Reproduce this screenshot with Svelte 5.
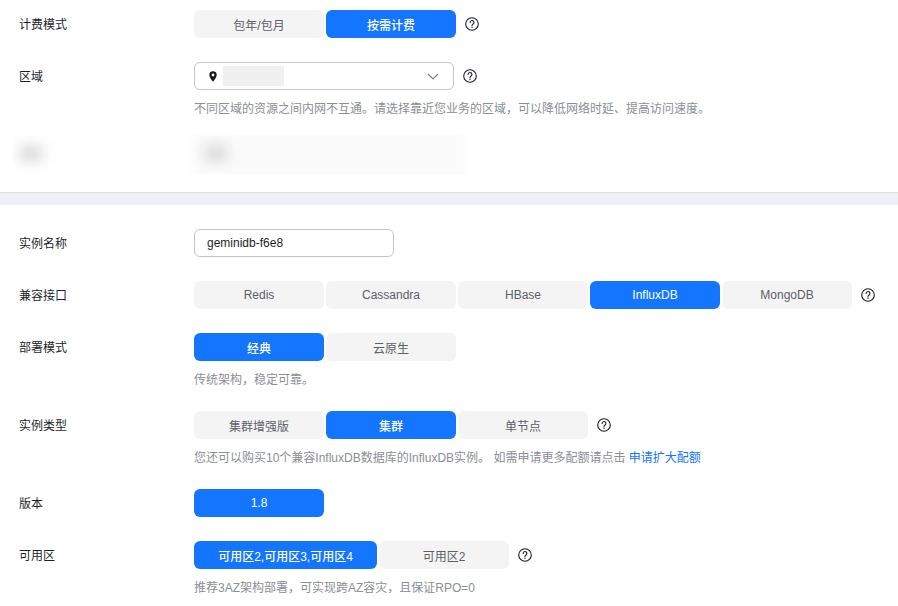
<script lang="ts">
  const groups = {
    billing: [
      { label: '包年/包月' },
      { label: '按需计费', active: true }
    ],
    api: [
      { label: 'Redis' },
      { label: 'Cassandra' },
      { label: 'HBase' },
      { label: 'InfluxDB', active: true },
      { label: 'MongoDB' }
    ],
    mode: [
      { label: '经典', active: true },
      { label: '云原生' }
    ],
    type: [
      { label: '集群增强版' },
      { label: '集群', active: true },
      { label: '单节点' }
    ],
    version: [{ label: '1.8', active: true }],
    zone: [
      { label: '可用区2,可用区3,可用区4', active: true, wide: true },
      { label: '可用区2' }
    ]
  };
</script>

{#snippet help()}
  <svg class="help" width="14" height="14" viewBox="0 0 14 14" fill="none" stroke="#1b1f2a" stroke-width="1.1">
    <circle cx="7" cy="7" r="6.3"></circle>
    <path d="M5.1 5.5a1.9 1.9 0 1 1 3 1.5c-.7.5-1.1.8-1.1 1.6" stroke-linecap="round"></path>
    <circle cx="7" cy="10.2" r=".7" fill="#1b1f2a" stroke="none"></circle>
  </svg>
{/snippet}

{#snippet tabs(items)}
  <div class="tabs">
    {#each items as item}
      <button class="tab" class:active={item.active} class:wide={item.wide}>{item.label}</button>
    {/each}
  </div>
{/snippet}

<main>
  <section class="top">
    <div class="row">
      <div class="label">计费模式</div>
      <div class="field">
        <div class="line">
          {@render tabs(groups.billing)}
          {@render help()}
        </div>
      </div>
    </div>

    <div class="row">
      <div class="label">区域</div>
      <div class="field">
        <div class="line">
          <div class="select">
            <svg class="pin" width="8" height="11" viewBox="0 0 8 11">
              <path fill-rule="evenodd" fill="#14171f" d="M4 .3a3.7 3.7 0 0 1 3.7 3.7C7.700 6.300 4 10.700 4 10.700S.3 6.300.3 4A3.700 3.700 0 0 1 4 .3zm0 2.300a1.400 1.400 0 1 0 0 2.800 1.400 1.400 0 0 0 0-2.800z"></path>
            </svg>
            <span class="masked"></span>
            <svg class="chevron" width="12" height="7" viewBox="0 0 12 7" fill="none" stroke="#7d818c" stroke-width="1.2">
              <path d="M1 1l5 5 5-5"></path>
            </svg>
          </div>
          {@render help()}
        </div>
        <p class="hint">不同区域的资源之间内网不互通。请选择靠近您业务的区域，可以降低网络时延、提高访问速度。</p>
      </div>
    </div>

    <!-- redacted row -->
    <div class="redacted">
      <span class="smudge first"></span>
      <span class="band"></span>
      <span class="smudge second"></span>
    </div>
  </section>

  <div class="divider"></div>

  <section class="bottom">
    <div class="row">
      <div class="label">实例名称</div>
      <div class="field">
        <input class="name" value="geminidb-f6e8" />
      </div>
    </div>

    <div class="row">
      <div class="label">兼容接口</div>
      <div class="field">
        <div class="line">
          {@render tabs(groups.api)}
          {@render help()}
        </div>
      </div>
    </div>

    <div class="row">
      <div class="label">部署模式</div>
      <div class="field">
        {@render tabs(groups.mode)}
        <p class="hint">传统架构，稳定可靠。</p>
      </div>
    </div>

    <div class="row">
      <div class="label">实例类型</div>
      <div class="field">
        <div class="line">
          {@render tabs(groups.type)}
          {@render help()}
        </div>
        <p class="hint">您还可以购买10个兼容InfluxDB数据库的InfluxDB实例。 如需申请更多配额请点击 <a href="#quota">申请扩大配额</a></p>
      </div>
    </div>

    <div class="row">
      <div class="label">版本</div>
      <div class="field">
        {@render tabs(groups.version)}
      </div>
    </div>

    <div class="row">
      <div class="label">可用区</div>
      <div class="field">
        <div class="line">
          {@render tabs(groups.zone)}
          {@render help()}
        </div>
        <p class="hint">推荐3AZ架构部署，可实现跨AZ容灾，且保证RPO=0</p>
      </div>
    </div>
  </section>
</main>

<style>
  :global(body) {
    margin: 0;
    background: #fff;
    overflow: hidden;
  }

  main {
    width: 898px;
    height: 606px;
    overflow: hidden;
    font-family: "Liberation Sans", "Noto Sans CJK SC", sans-serif;
    font-size: 12px;
    color: #1b1f2a;
  }

  section {
    display: flex;
    flex-direction: column;
    gap: 24px;
  }

  .top {
    padding-top: 10px;
  }

  .bottom {
    padding-top: 24px;
  }

  .row {
    display: flex;
  }

  .label {
    width: 194px;
    padding: 2px 0 0 19px;
    box-sizing: border-box;
    line-height: 26px;
    flex-shrink: 0;
  }

  .line {
    display: flex;
    align-items: center;
    gap: 9px;
  }

  .tabs {
    display: flex;
    gap: 2px;
  }

  .tab {
    width: 130px;
    height: 28px;
    padding: 0;
    border: none;
    border-radius: 6px;
    background: #f4f4f4;
    color: #5c5f66;
    font: inherit;
    cursor: pointer;
  }

  .tab.active {
    background: #1476ff;
    color: #fff;
    font-weight: 500;
  }

  .tab.wide {
    width: 183px;
  }

  .select {
    width: 260px;
    height: 28px;
    box-sizing: border-box;
    border: 1px solid #c4c4c4;
    border-radius: 6px;
    display: flex;
    align-items: center;
    padding: 0 14px;
  }

  .pin {
    flex-shrink: 0;
    margin-right: 6px;
  }

  .masked {
    width: 61px;
    height: 20px;
    background: #f0f0f0;
  }

  .chevron {
    margin-left: auto;
  }

  .hint {
    margin: 11px 0 -1px;
    line-height: 16px;
    color: #8a8e96;
    white-space: nowrap;
  }

  a {
    color: #1476ff;
    text-decoration: none;
  }

  .name {
    display: block;
    width: 200px;
    height: 28px;
    box-sizing: border-box;
    padding: 0 12px;
    border: 1px solid #c4c4c4;
    border-radius: 6px;
    color: #1b1f2a;
    font: inherit;
    outline: none;
  }

  .redacted {
    position: relative;
    height: 39px;
    margin: -5px 0 18px 13px;
    width: 453px;
    overflow: hidden;
  }

  .smudge {
    position: absolute;
    top: 11px;
    width: 22px;
    height: 15px;
    background: #d6d6d6;
    filter: blur(7px);
  }

  .smudge.first {
    left: 7px;
  }

  .smudge.second {
    left: 192px;
  }

  .band {
    position: absolute;
    left: 180px;
    top: -10px;
    bottom: -10px;
    right: 0;
    background: #fbfbfb;
    filter: blur(5px);
  }

  .divider {
    height: 12px;
    background: #eef0f5;
    border-top: 1px solid #dfdfdf;
  }
</style>
